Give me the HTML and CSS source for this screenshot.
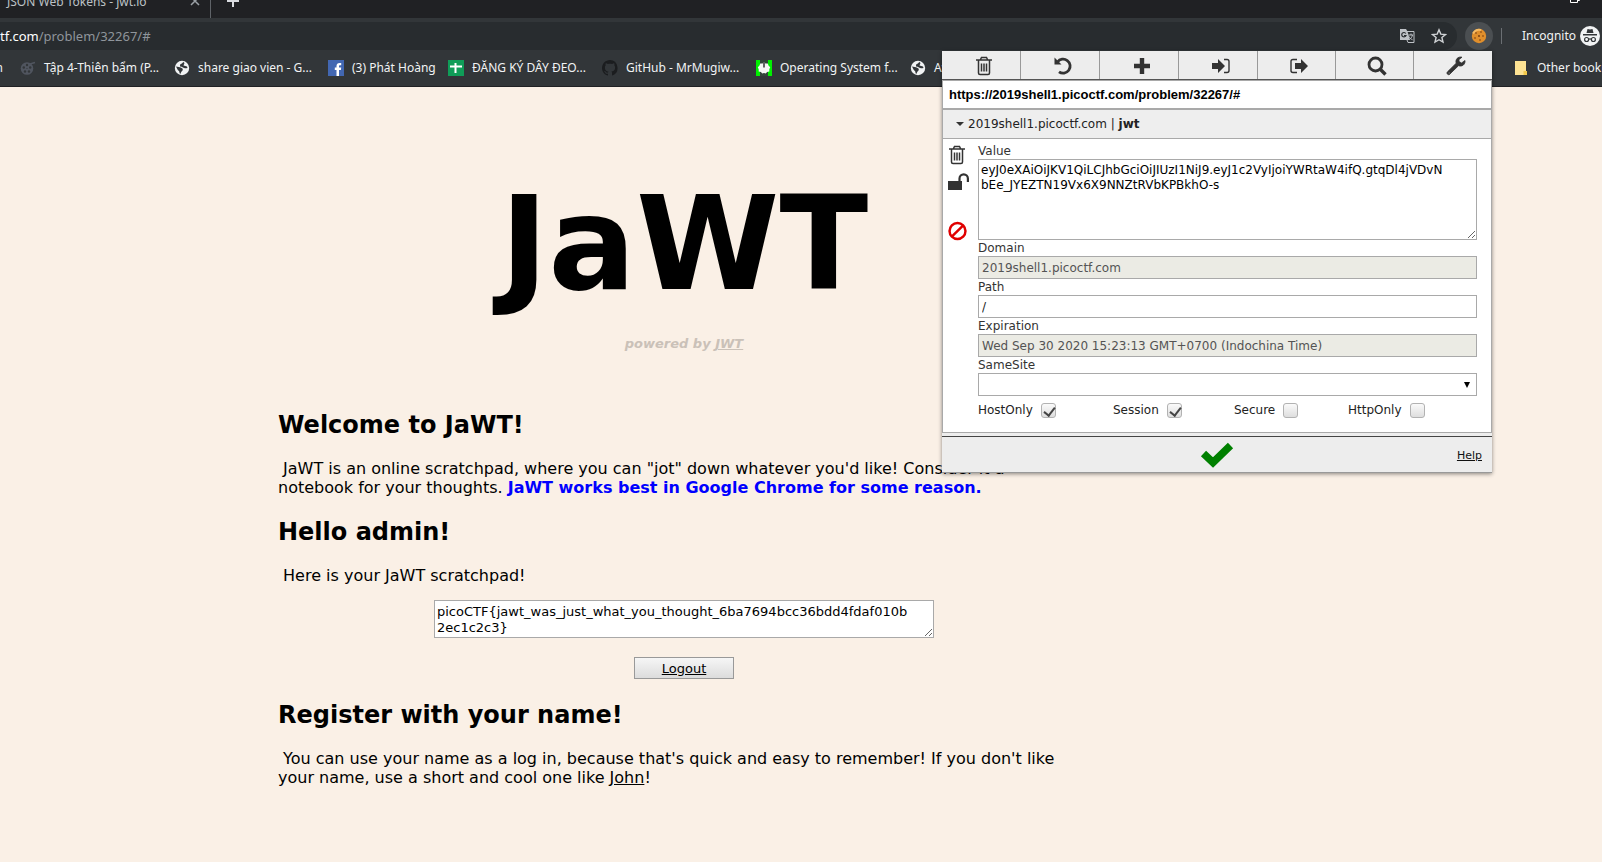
FILE: index.html
```html
<!DOCTYPE html>
<html lang="en">
<head>
<meta charset="utf-8">
<title>JaWT</title>
<link rel="stylesheet" href="styles.css">
</head>
<body>
<svg class="defs" width="0" height="0" aria-hidden="true">
  <symbol id="trash" viewBox="0 0 18 20">
    <path d="M3.5 4.5V17q0 1.500 1.500 1.500h8q1.500 0 1.500-1.500V4.500M1 4h16M5.500 3.500 6.500 1.500h5l1 2M6.500 7.500v8M9 7.500v8M11.500 7.500v8" fill="none" stroke="currentColor" stroke-width="1.500"/>
  </symbol>
  <symbol id="globe" viewBox="0 0 16 16">
    <circle cx="8" cy="8" r="7.200" fill="#f1f3f4"/>
    <path d="M9 1.800 C9 4 6 3.500 6 5.500S8 6.500 9 7.500s2.500.8 4.500.5L13 6.500 9.500 5.500 10.500 3zM2 6.500l4 .8c1.500.5 3 1 2.800 2.500S7 11 6.800 13.800L5.500 13.300C5.800 11 4.500 11 3.500 9.500z" fill="#323639"/>
  </symbol>
</svg>

<header class="browser">
  <div class="tabs">
    <span class="tab-title">JSON Web Tokens - jwt.io</span>
    <button class="tab-close" aria-label="Close tab"><svg width="10" height="10" viewBox="0 0 10 10"><path d="m1 1 8 8M9 1 1 9" stroke="#9aa0a6" stroke-width="1.500"/></svg></button>
    <button class="tab-new" aria-label="New tab"><svg width="14" height="14" viewBox="0 0 14 14"><path d="M7 1v12M1 7h12" stroke="#dadce0" stroke-width="2"/></svg></button>
    <button class="restore" aria-label="Restore window"><svg width="12" height="12" viewBox="0 0 12 12"><path d="M1.500 3.500h7v7h-7zM4 3V1.500h6.500v7H9" fill="none" stroke="#fff"/></svg></button>
  </div>
  <div class="toolbar">
    <div class="address">
      <span class="url"><b>tf.com</b>/problem/32267/#</span>
      <svg width="16" height="16" viewBox="0 0 16 16"><path d="M1 1h6l1.500 2.500L11 12H1z" fill="#bdc1c6"/><path d="M8 3.500h7v11H9L8 12" fill="none" stroke="#bdc1c6"/><path d="M6.800 5.500A2.200 2.200 0 1 0 7 7.500H5" fill="none" stroke="#282c2f" stroke-width="1.200"/><path d="M9.500 7H14M12 5.500V7m1.500 0c-.5 2-1.500 3.500-3 4.500M10 8.500c.7 1.500 2 2.700 3.500 3.200" fill="none" stroke="#bdc1c6"/></svg>
      <svg width="16" height="16" viewBox="0 0 16 16"><path d="m8 1.800 1.800 4.300 4.700.4-3.600 3 1.100 4.600L8 11.700l-4 2.400 1.100-4.600-3.600-3 4.700-.4z" fill="none" stroke="#d0d3d6" stroke-width="1.400"/></svg>
    </div>
    <button class="cookie" aria-label="Cookie editor"><svg width="16" height="16" viewBox="0 0 16 16"><circle cx="8" cy="8" r="7.200" fill="#e08f2c"/><path d="M2 5.500Q5 .5 10 2" stroke="#f6bb64" stroke-width="2" fill="none"/><g fill="#6d3710"><circle cx="5" cy="5" r=".8"/><circle cx="10" cy="4" r=".8"/><circle cx="8" cy="8" r=".9"/><circle cx="12" cy="8" r=".8"/><circle cx="4" cy="10" r=".8"/><circle cx="9" cy="12" r=".8"/></g></svg></button>
    <span class="rule"></span>
    <span class="incognito">Incognito</span>
    <svg class="spy" width="20" height="20" viewBox="0 0 20 20"><circle cx="10" cy="10" r="10" fill="#f1f3f4"/><path d="m6.500 7 1-4 2.500.6 2.500-.6 1 4zM3 8h14v1.400H3z" fill="#323639"/><g fill="none" stroke="#323639" stroke-width="1.200"><circle cx="6.600" cy="13.500" r="2"/><circle cx="13.400" cy="13.500" r="2"/><path d="M8.600 13.200q1.400-.8 2.800 0"/></g></svg>
  </div>
  <nav class="bookmarks">
    <span class="cut">n</span>
    <a class="bm" href="#"><svg width="16" height="16" viewBox="0 0 16 16"><circle cx="7" cy="8.500" r="6.300" fill="#50555f"/><path d="m10 4 5-1.500" stroke="#50555f" stroke-width="1.500"/><g fill="#323639"><circle cx="7" cy="5" r="1.200"/><circle cx="3.800" cy="7.500" r="1.200"/><circle cx="10.200" cy="7.500" r="1.200"/><circle cx="5" cy="11.500" r="1.200"/><circle cx="9" cy="11.500" r="1.200"/><circle cx="7" cy="8.500" r=".6"/></g></svg><span>Tập 4-Thiên bẩm (P...</span></a>
    <a class="bm" href="#"><svg width="16" height="16"><use href="#globe"/></svg><span>share giao vien - G...</span></a>
    <a class="bm short" href="#"><svg width="16" height="16" viewBox="0 0 16 16"><path d="M0 0h16v16H0z" fill="#4267b2"/><path d="M8.500 16V10H6.800V7.500h1.700V6c0-2 1.200-3 3-3h1.700v2.300H12c-.8 0-1 .4-1 1v1.200h2.200L12.900 10H11v6z" fill="#fff"/></svg><span>(3) Phát Hoàng</span></a>
    <a class="bm" href="#"><svg width="16" height="16" viewBox="0 0 16 16"><path d="M0 0h16v16H0z" fill="#0f9d58"/><path d="M2 6.500h12M7.500 3v10" stroke="#fff" stroke-width="2"/></svg><span>ĐĂNG KÝ DÂY ĐEO...</span></a>
    <a class="bm" href="#"><svg width="16" height="16" viewBox="0 0 16 16"><path fill="#1b1d1f" d="M8 0C3.600 0 0 3.600 0 8c0 3.500 2.300 6.500 5.500 7.600.4.100.5-.2.500-.4v-1.500c-2 .4-2.500-.5-2.700-1-.1-.2-.5-.9-.8-1.100-.3-.2-.7-.5 0-.6.600 0 1.100.6 1.200.8.700 1.200 1.900.9 2.300.7.100-.5.300-.9.500-1.100-1.800-.2-3.600-.9-3.600-4 0-.9.300-1.600.8-2.100-.1-.2-.4-1 .1-2.100 0 0 .7-.2 2.200.8.600-.2 1.300-.3 2-.3s1.400.1 2 .3c1.500-1 2.200-.8 2.200-.8.400 1.100.2 1.900.1 2.100.5.600.8 1.300.8 2.100 0 3.100-1.900 3.700-3.700 3.900.3.300.6.700.6 1.500v2.200c0 .2.100.5.500.4A8 8 0 0 0 8 0"/></svg><span>GitHub - MrMugiw...</span></a>
    <a class="bm" href="#"><svg width="16" height="16" viewBox="0 0 16 16"><path d="M0 0h16v16H0z" fill="#00f000"/><path d="M4 0h8v16H4z" fill="#32443a"/><path d="m8 2.500 1.500 1 2.300-.1.700 2.200 1.700 1.700-.9 1.900v2.200l-2.200.7L9.700 13.500 8 13l-1.700.5-1.400-1.400-2.200-.7V9.200l-.9-1.900 1.700-1.700.7-2.200 2.300.1z" fill="#f5f7f5"/><path d="M8 3v4.500" stroke="#333" stroke-width="1.500"/></svg><span>Operating System f...</span></a>
    <a class="bm" href="#"><svg width="16" height="16"><use href="#globe"/></svg><span>Av</span></a>
    <span class="others"><span class="rule"></span><svg width="12" height="16" viewBox="0 0 12 16"><path d="M0 1h11v14H0z" fill="#fde293"/><path d="M8.500 15V11H12v4z" fill="#f2c94c"/></svg><a class="bm-other" href="#">Other bookmarks</a></span>
  </nav>
</header>

<main class="page">
  <h1>JaWT</h1>
  <p class="powered">powered by <a href="#">JWT</a></p>
  <h2 class="first">Welcome to JaWT!</h2>
  <p>&nbsp;JaWT is an online scratchpad, where you can "jot" down whatever you'd like! Consider it a notebook for your thoughts. <strong>JaWT works best in Google Chrome for some reason.</strong></p>
  <h2>Hello admin!</h2>
  <p>&nbsp;Here is your JaWT scratchpad!</p>
  <textarea class="scratch" aria-label="Scratchpad">picoCTF{jawt_was_just_what_you_thought_6ba7694bcc36bdd4fdaf010b2ec1c2c3}</textarea>
  <button class="logout">Logout</button>
  <h2>Register with your name!</h2>
  <p>&nbsp;You can use your name as a log in, because that's quick and easy to remember! If you don't like your name, use a short and cool one like <a href="#">John</a>!</p>
</main>

<aside class="popup">
  <div class="actions">
    <button aria-label="Delete all"><svg width="18" height="20"><use href="#trash"/></svg></button>
    <button aria-label="Reset"><svg width="20" height="20" viewBox="0 0 20 20"><path d="M4.500 6A7 7 0 1 1 6 15.800" fill="none" stroke="currentColor" stroke-width="2.800"/><path d="M1.500 1.500v7h7z" fill="currentColor"/></svg></button>
    <button aria-label="Add"><svg width="18" height="18" viewBox="0 0 18 18"><path d="M9 1v16M1 9h16" stroke="currentColor" stroke-width="4.400"/></svg></button>
    <button aria-label="Import"><svg width="20" height="18" viewBox="0 0 20 18"><path d="M1 6h6V2l7 7-7 7v-4H1z" fill="currentColor"/><path d="M13 2.500h3q2 0 2 2v9q0 2-2 2h-3" fill="none" stroke="currentColor" stroke-width="1.400"/></svg></button>
    <button aria-label="Export"><svg width="20" height="18" viewBox="0 0 20 18"><path d="M6 6h6V2l7 7-7 7v-4H6z" fill="currentColor"/><path d="M8 2.500H4q-2 0-2 2v9q0 2 2 2h4" fill="none" stroke="currentColor" stroke-width="1.400"/></svg></button>
    <button aria-label="Search"><svg width="20" height="20" viewBox="0 0 20 20"><circle cx="8.500" cy="8.500" r="6.500" fill="none" stroke="currentColor" stroke-width="2.800"/><path d="m13 13 5.500 5.500" stroke="currentColor" stroke-width="3.400"/></svg></button>
    <button aria-label="Settings"><svg width="20" height="20" viewBox="0 0 20 20"><path d="M19 4.500 15.500 7 13 5.500V3.500L16 1.200C12 .2 9 3.500 10.200 7.200L1.300 16q-.8 1 0 2 1.200 1.200 2.200.4l9-8.700C16 11 19.500 8.500 19 4.500M3.200 17.800a.8.800 0 1 1 0-1.600.8.800 0 0 1 0 1.600" fill="currentColor" fill-rule="evenodd" stroke="currentColor" stroke-width=".8"/></svg></button>
  </div>
  <div class="site">https://2019shell1.picoctf.com/problem/32267/#</div>
  <div class="cookie-head"><span class="caret"></span><span>2019shell1.picoctf.com | <b>jwt</b></span></div>
  <form class="editor">
    <div class="side">
      <button type="button" aria-label="Delete"><svg width="18" height="20"><use href="#trash"/></svg></button>
      <button type="button" class="lock" aria-label="Unlock"><svg width="22" height="18" viewBox="0 0 22 18"><path d="M0 8h14v9H0z" fill="currentColor"/><path d="M11.500 8V5.500a4.200 4.200 0 0 1 8.400 0V9" fill="none" stroke="currentColor" stroke-width="2.200"/></svg></button>
      <button type="button" class="block" aria-label="Block"><svg width="19" height="20" viewBox="0 0 20 20"><circle cx="10" cy="10" r="8.400" fill="none" stroke="#e00000" stroke-width="2.600"/><path d="M15.500 4.500 4.500 15.500" stroke="#e00000" stroke-width="2.600"/></svg></button>
    </div>
    <div class="fields">
      <label for="value">Value</label>
      <textarea id="value">eyJ0eXAiOiJKV1QiLCJhbGciOiJIUzI1NiJ9.eyJ1c2VyIjoiYWRtaW4ifQ.gtqDl4jVDvNbEe_JYEZTN19Vx6X9NNZtRVbKPBkhO-s</textarea>
      <label for="domain">Domain</label>
      <input class="text" id="domain" type="text" value="2019shell1.picoctf.com" disabled>
      <label for="path">Path</label>
      <input class="text" id="path" type="text" value="/">
      <label for="expiration">Expiration</label>
      <input class="text" id="expiration" type="text" value="Wed Sep 30 2020 15:23:13 GMT+0700 (Indochina Time)" disabled>
      <label for="samesite">SameSite</label>
      <div class="select"><select id="samesite"><option></option><option>Lax</option><option>Strict</option></select></div>
      <div class="checks">
        <label>HostOnly <input type="checkbox" checked></label>
        <label>Session <input type="checkbox" checked></label>
        <label>Secure <input type="checkbox"></label>
        <label>HttpOnly <input type="checkbox"></label>
      </div>
    </div>
  </form>
  <footer class="foot">
    <button class="save" aria-label="Save"><svg width="34" height="26" viewBox="0 0 34 26"><path d="M3.500 11.500 13 20.500 30.500 3.500" fill="none" stroke="#008000" stroke-width="7.500"/></svg></button>
    <a href="#">Help</a>
  </footer>
</aside>
</body>
</html>
```
FILE: styles.css
```css
* { box-sizing: border-box; }

body {
  margin: 0;
  min-height: 100vh;
  background: #faf0e6;
  color: #000;
  font-family: Verdana, "DejaVu Sans", sans-serif;
  font-size: 16px;
  line-height: 19px;
  overflow: hidden;
  position: relative;
}

button { border: 0; padding: 0; background: none; color: inherit; font: inherit; }
svg { display: block; flex: none; }
.defs { position: absolute; }

/* Browser chrome */
.browser {
  font-family: "Segoe UI", "Noto Sans", sans-serif;
  font-size: 12px;
  line-height: 16px;
  color: #f1f3f4;
  background: #323639;
  border-bottom: 1px solid #202124;
}
.tabs {
  display: flex;
  align-items: flex-end;
  height: 18px;
  padding: 0 21px 0 7px;
  background: #202124;
  overflow: hidden;
  color: #bdc1c6;
}
.tab-title { width: 183px; padding-bottom: 8px; white-space: nowrap; }
.tab-close { width: 21px; padding-bottom: 12px; border-right: 1px solid #5f6368; }
.tab-new { margin-left: 15px; padding-bottom: 10px; }
.restore { margin-left: auto; padding-bottom: 14px; }

.toolbar { display: flex; align-items: center; height: 32px; padding-top: 4px; }
.address {
  flex: 1;
  display: flex;
  align-items: center;
  gap: 16px;
  height: 28px;
  padding-right: 10px;
  background: #282c2f;
  border-radius: 0 14px 14px 0;
}
.url { flex: 1; font-size: 13px; line-height: 20px; color: #8f959b; }
.url b { font-weight: 400; color: #fff; }
.cookie {
  display: grid;
  place-items: center;
  width: 28px;
  height: 28px;
  margin: 0 8px;
  border-radius: 50%;
  background: #4b4f52;
}
.rule { width: 1px; height: 16px; background: #6b6f73; }
.incognito { width: 58px; margin-left: 20px; }
.spy { margin-right: 2px; }

.bookmarks {
  display: flex;
  align-items: center;
  gap: 17px;
  height: 36px;
  overflow: hidden;
  white-space: nowrap;
}
.cut { width: 3px; direction: rtl; }
.bookmarks a { color: inherit; text-decoration: none; }
.bm { display: flex; gap: 8px; flex: none; }
.bm span { width: 113px; }
.short span { width: 79px; }
.others { display: flex; align-items: center; width: 99px; flex: none; margin-left: auto; }
.others svg { margin: 0 10px 0 12px; }

/* Page */
.page {
  max-width: 1090px;
  padding: 79px 0 0 278px;
}
.page a { color: inherit; }
h1 { margin: 0 0 14px; font-size: 130px; line-height: 156px; text-align: center; }
h2 { margin: 21px 0 20px; font-size: 24px; line-height: 28px; }
.first { margin-top: 59px; }
p { margin: 0; }
.powered {
  color: #cac1b8;
  font-size: 13px;
  font-style: italic;
  font-weight: 700;
  line-height: 16px;
  text-align: center;
}
.page p:not(.powered) { max-width: 800px; }
strong { color: #00f; }
.scratch {
  display: block;
  width: 500px;
  height: 38px;
  margin: 15px auto 19px;
  padding: 3px 20px 0 2px;
  border: 1px solid #a9a9a9;
  background: #fff;
  font: 13px/16px Verdana, "DejaVu Sans", sans-serif;
  overflow: hidden;
}
.logout {
  display: block;
  width: 100px;
  height: 22px;
  margin: 0 auto 22px;
  padding-top: 1px;
  border: 1px solid #999;
  background: linear-gradient(#f6f6f6, #dcdcdc);
  font-size: 13px;
  line-height: 16px;
  text-decoration: underline;
}

/* Cookie editor popup */
.popup {
  position: absolute;
  top: 51px;
  right: 110px;
  width: 550px;
  background: #ededed;
  box-shadow: 0 1px 4px rgba(0, 0, 0, .45);
  color: #333;
  font-size: 12px;
  line-height: 15px;
}
.actions { display: grid; grid-template-columns: repeat(4, 79px) repeat(2, 78px) 1fr; height: 29px; border-bottom: 1px solid #555; }
.actions button { display: grid; place-items: center; padding: 2px 0 0 5px; border-right: 1px solid #999; }
.actions button:last-child { border-right: 0; }
.site {
  height: 29px;
  padding: 6px;
  border: 1px solid #a9a9a9;
  background: #fff;
  color: #000;
  font: bold 13px/16px Arial, "Liberation Sans", sans-serif;
}
.cookie-head {
  display: flex;
  align-items: center;
  gap: 4px;
  height: 30px;
  padding-left: 13px;
  border: 1px solid #a9a9a9;
  background: #eee;
  color: #222;
}
.caret { border: 4px solid transparent; border-top-color: #333; border-bottom: 0; }
.editor {
  display: flex;
  padding: 4px 14px 14px 5px;
  border: 1px solid #a9a9a9;
  border-top: 0;
  background: #fff;
}
.side { width: 30px; padding-top: 2px; }
.side button { display: block; }
.side .lock { margin-top: 8px; }
.side .block { margin-top: 30px; }
.fields { flex: 1; display: flex; flex-direction: column; }
.fields label { height: 16px; line-height: 17px; }
#value {
  height: 81px;
  padding: 3px 28px 2px 2px;
  border: 1px solid #a9a9a9;
  font: 12px/15px Verdana, "DejaVu Sans", sans-serif;
  word-break: break-all;
}
.text, .select {
  height: 23px;
  border: 1px solid #a9a9a9;
  border-radius: 0;
  background: #fff;
  font: inherit;
}
.text { padding: 0 3px; color: #222; }
.text:disabled { background: #ebebe4; color: #545454; }
.select { position: relative; }
.select select { width: 100%; height: 100%; border: 0; background: none; appearance: none; font: inherit; }
.select::after {
  content: "";
  position: absolute;
  top: 8px;
  right: 6px;
  border: 3px solid transparent;
  border-top: 6px solid #000;
  border-bottom: 0;
}
.checks { display: grid; grid-template-columns: 135px 121px 114px auto; padding-top: 6px; }
.checks label { display: flex; align-items: center; gap: 8px; color: #222; }
.checks input {
  appearance: none;
  width: 15px;
  height: 15px;
  margin: 0;
  border: 1px solid #b2b2b2;
  border-radius: 3px;
  background: linear-gradient(#fafafa, #dedede);
  position: relative;
}
.checks input:checked::after {
  content: "";
  position: absolute;
  left: 4px;
  top: 1px;
  width: 5px;
  height: 9px;
  border: solid #444;
  border-width: 0 2px 2px 0;
  transform: rotate(38deg);
}
.foot {
  display: grid;
  grid-template-columns: 1fr auto 1fr;
  align-items: center;
  height: 37px;
  margin-top: 3px;
  padding: 1px 10px 0;
  border-top: 1px solid #444;
  border-bottom: 1px solid #999;
}
.save { grid-column: 2; }
.foot a { justify-self: end; color: #111; font-size: 11px; }
```
